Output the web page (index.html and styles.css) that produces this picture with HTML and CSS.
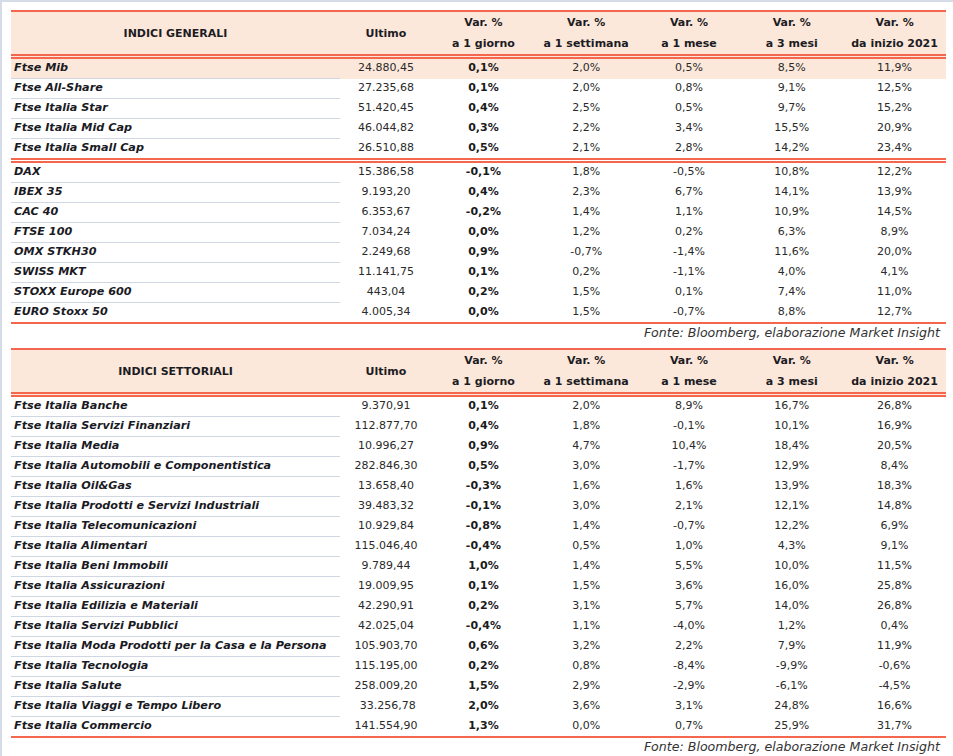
FILE: index.html
```html
<!DOCTYPE html>
<html lang="it">
<head>
<meta charset="utf-8">
<title>Indici</title>
<link rel="stylesheet" href="styles.css">
</head>
<body>
<div class="page">
  <table class="idx">
    <colgroup>
      <col class="c-name"><col class="c-ult"><col class="c-var"><col class="c-var"><col class="c-var"><col class="c-var"><col class="c-var">
    </colgroup>
    <thead>
      <tr>
        <th class="h-name">INDICI GENERALI</th>
        <th>Ultimo</th>
        <th>Var. %<br>a 1 giorno</th>
        <th>Var. %<br>a 1 settimana</th>
        <th>Var. %<br>a 1 mese</th>
        <th>Var. %<br>a 3 mesi</th>
        <th>Var. %<br>da inizio 2021</th>
      </tr>
    </thead>
    <tbody class="grp-mid">
      <tr class="hl"><td class="n">Ftse Mib</td><td>24.880,45</td><td class="b">0,1%</td><td>2,0%</td><td>0,5%</td><td>8,5%</td><td>11,9%</td></tr>
      <tr><td class="n">Ftse All-Share</td><td>27.235,68</td><td class="b">0,1%</td><td>2,0%</td><td>0,8%</td><td>9,1%</td><td>12,5%</td></tr>
      <tr><td class="n">Ftse Italia Star</td><td>51.420,45</td><td class="b">0,4%</td><td>2,5%</td><td>0,5%</td><td>9,7%</td><td>15,2%</td></tr>
      <tr><td class="n">Ftse Italia Mid Cap</td><td>46.044,82</td><td class="b">0,3%</td><td>2,2%</td><td>3,4%</td><td>15,5%</td><td>20,9%</td></tr>
      <tr><td class="n">Ftse Italia Small Cap</td><td>26.510,88</td><td class="b">0,5%</td><td>2,1%</td><td>2,8%</td><td>14,2%</td><td>23,4%</td></tr>
    </tbody>
    <tbody class="grp-end">
      <tr><td class="n">DAX</td><td>15.386,58</td><td class="b">-0,1%</td><td>1,8%</td><td>-0,5%</td><td>10,8%</td><td>12,2%</td></tr>
      <tr><td class="n">IBEX 35</td><td>9.193,20</td><td class="b">0,4%</td><td>2,3%</td><td>6,7%</td><td>14,1%</td><td>13,9%</td></tr>
      <tr><td class="n">CAC 40</td><td>6.353,67</td><td class="b">-0,2%</td><td>1,4%</td><td>1,1%</td><td>10,9%</td><td>14,5%</td></tr>
      <tr><td class="n">FTSE 100</td><td>7.034,24</td><td class="b">0,0%</td><td>1,2%</td><td>0,2%</td><td>6,3%</td><td>8,9%</td></tr>
      <tr><td class="n">OMX STKH30</td><td>2.249,68</td><td class="b">0,9%</td><td>-0,7%</td><td>-1,4%</td><td>11,6%</td><td>20,0%</td></tr>
      <tr><td class="n">SWISS MKT</td><td>11.141,75</td><td class="b">0,1%</td><td>0,2%</td><td>-1,1%</td><td>4,0%</td><td>4,1%</td></tr>
      <tr><td class="n">STOXX Europe 600</td><td>443,04</td><td class="b">0,2%</td><td>1,5%</td><td>0,1%</td><td>7,4%</td><td>11,0%</td></tr>
      <tr><td class="n">EURO Stoxx 50</td><td>4.005,34</td><td class="b">0,0%</td><td>1,5%</td><td>-0,7%</td><td>8,8%</td><td>12,7%</td></tr>
    </tbody>
  </table>
  <p class="fonte">Fonte: Bloomberg, elaborazione Market Insight</p>

  <table class="idx idx-2">
    <colgroup>
      <col class="c-name"><col class="c-ult"><col class="c-var"><col class="c-var"><col class="c-var"><col class="c-var"><col class="c-var">
    </colgroup>
    <thead>
      <tr>
        <th class="h-name">INDICI SETTORIALI</th>
        <th>Ultimo</th>
        <th>Var. %<br>a 1 giorno</th>
        <th>Var. %<br>a 1 settimana</th>
        <th>Var. %<br>a 1 mese</th>
        <th>Var. %<br>a 3 mesi</th>
        <th>Var. %<br>da inizio 2021</th>
      </tr>
    </thead>
    <tbody class="grp-end">
      <tr><td class="n">Ftse Italia Banche</td><td>9.370,91</td><td class="b">0,1%</td><td>2,0%</td><td>8,9%</td><td>16,7%</td><td>26,8%</td></tr>
      <tr><td class="n">Ftse Italia Servizi Finanziari</td><td>112.877,70</td><td class="b">0,4%</td><td>1,8%</td><td>-0,1%</td><td>10,1%</td><td>16,9%</td></tr>
      <tr><td class="n">Ftse Italia Media</td><td>10.996,27</td><td class="b">0,9%</td><td>4,7%</td><td>10,4%</td><td>18,4%</td><td>20,5%</td></tr>
      <tr><td class="n">Ftse Italia Automobili e Componentistica</td><td>282.846,30</td><td class="b">0,5%</td><td>3,0%</td><td>-1,7%</td><td>12,9%</td><td>8,4%</td></tr>
      <tr><td class="n">Ftse Italia Oil&amp;Gas</td><td>13.658,40</td><td class="b">-0,3%</td><td>1,6%</td><td>1,6%</td><td>13,9%</td><td>18,3%</td></tr>
      <tr><td class="n">Ftse Italia Prodotti e Servizi Industriali</td><td>39.483,32</td><td class="b">-0,1%</td><td>3,0%</td><td>2,1%</td><td>12,1%</td><td>14,8%</td></tr>
      <tr><td class="n">Ftse Italia Telecomunicazioni</td><td>10.929,84</td><td class="b">-0,8%</td><td>1,4%</td><td>-0,7%</td><td>12,2%</td><td>6,9%</td></tr>
      <tr><td class="n">Ftse Italia Alimentari</td><td>115.046,40</td><td class="b">-0,4%</td><td>0,5%</td><td>1,0%</td><td>4,3%</td><td>9,1%</td></tr>
      <tr><td class="n">Ftse Italia Beni Immobili</td><td>9.789,44</td><td class="b">1,0%</td><td>1,4%</td><td>5,5%</td><td>10,0%</td><td>11,5%</td></tr>
      <tr><td class="n">Ftse Italia Assicurazioni</td><td>19.009,95</td><td class="b">0,1%</td><td>1,5%</td><td>3,6%</td><td>16,0%</td><td>25,8%</td></tr>
      <tr><td class="n">Ftse Italia Edilizia e Materiali</td><td>42.290,91</td><td class="b">0,2%</td><td>3,1%</td><td>5,7%</td><td>14,0%</td><td>26,8%</td></tr>
      <tr><td class="n">Ftse Italia Servizi Pubblici</td><td>42.025,04</td><td class="b">-0,4%</td><td>1,1%</td><td>-4,0%</td><td>1,2%</td><td>0,4%</td></tr>
      <tr><td class="n">Ftse Italia Moda Prodotti per la Casa e la Persona</td><td>105.903,70</td><td class="b">0,6%</td><td>3,2%</td><td>2,2%</td><td>7,9%</td><td>11,9%</td></tr>
      <tr><td class="n">Ftse Italia Tecnologia</td><td>115.195,00</td><td class="b">0,2%</td><td>0,8%</td><td>-8,4%</td><td>-9,9%</td><td>-0,6%</td></tr>
      <tr><td class="n">Ftse Italia Salute</td><td>258.009,20</td><td class="b">1,5%</td><td>2,9%</td><td>-2,9%</td><td>-6,1%</td><td>-4,5%</td></tr>
      <tr><td class="n">Ftse Italia Viaggi e Tempo Libero</td><td>&nbsp;33.256,78</td><td class="b">2,0%</td><td>3,6%</td><td>3,1%</td><td>24,8%</td><td>16,6%</td></tr>
      <tr><td class="n">Ftse Italia Commercio</td><td>141.554,90</td><td class="b">1,3%</td><td>0,0%</td><td>0,7%</td><td>25,9%</td><td>31,7%</td></tr>
    </tbody>
  </table>
  <p class="fonte">Fonte: Bloomberg, elaborazione Market Insight</p>
</div>
</body>
</html>
```

FILE: styles.css
```css
html, body {
  margin: 0;
  padding: 0;
  background: #ffffff;
}

body {
  font-family: "DejaVu Sans", "Liberation Sans", sans-serif;
  color: #1c1c24;
}

.page {
  border-top: 2px solid #d6dce7;
  border-left: 2px solid #d6dce7;
  padding: 8px 7px 0 9px;
  min-height: 754px;
  box-sizing: border-box;
}

.idx {
  width: 935px;
  table-layout: fixed;
  border-collapse: separate;
  border-spacing: 0;
}

.c-name { width: 329px; }
.c-ult { width: 92px; }
.c-var { width: 102.8px; }

.idx th {
  background: #fce8da;
  border-top: 2px solid #f4674e;
  border-bottom: 5px double #f4674e;
  height: 40px;
  padding: 0;
  font-size: 11px;
  font-weight: 700;
  line-height: 21px;
  text-align: center;
  color: #1c1c24;
}

.idx-2 th {
  height: 38px;
}

.idx td {
  height: 17px;
  padding: 0 0 2px 0;
  font-size: 11px;
  line-height: 17px;
  text-align: center;
  color: #2a2a2a;
  border-bottom: 1px solid transparent;
  white-space: nowrap;
}

.idx td.n {
  text-align: left;
  padding-left: 3px;
  font-size: 11.2px;
  font-weight: 700;
  font-style: italic;
  color: #1a1a24;
  border-bottom-color: #d0d7e3;
}

.idx td.b {
  font-weight: 700;
  color: #1a1a1a;
}

.idx tr.hl td {
  background: #fce8da;
}

.grp-mid tr:last-child td {
  border-bottom: 5px double #f4674e;
}

.grp-end tr:last-child td {
  border-bottom: 2px solid #f4674e;
}

.fonte {
  margin: 0;
  width: 935px;
  height: 24px;
  padding-right: 6px;
  box-sizing: border-box;
  text-align: right;
  font-style: italic;
  font-size: 12.6px;
  line-height: 18px;
  color: #333333;
}
```
